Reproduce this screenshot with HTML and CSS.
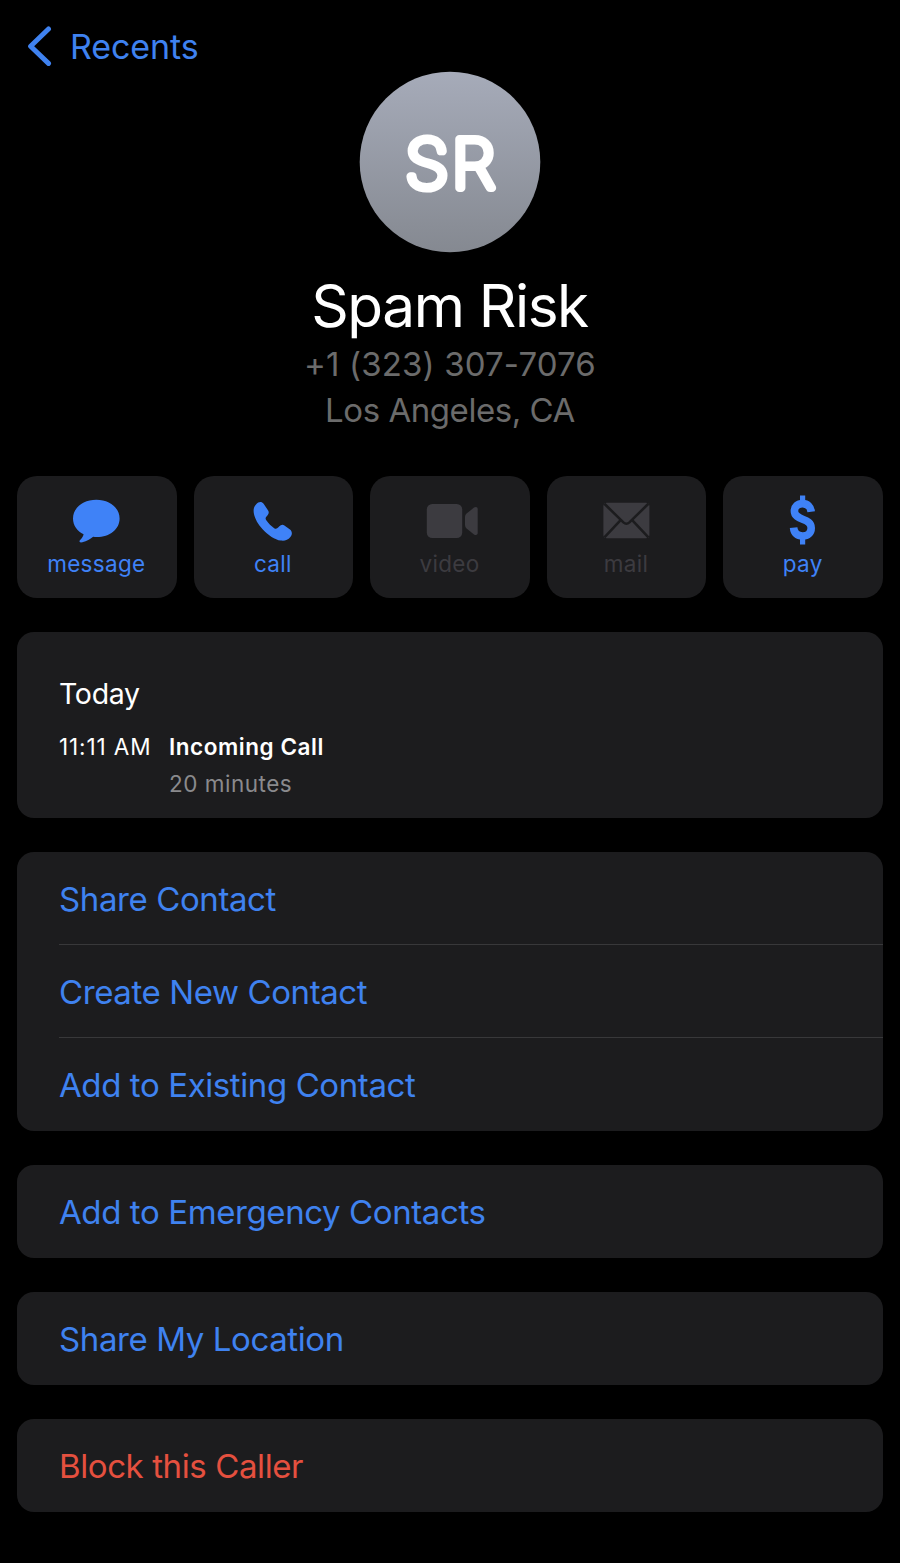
FILE: index.html
```html
<!DOCTYPE html>
<html lang="en">
<head>
  <meta charset="utf-8">
  <title>Spam Risk</title>
  <link rel="stylesheet" href="styles.css">
</head>
<body>
  <nav class="nav">
    <a class="back">
      <svg class="back-icon" width="26" height="42" viewBox="0 0 26 42">
        <path d="M22.5 4 L4.6 21.2 L22.5 38.4" fill="none" stroke="currentColor" stroke-width="5" stroke-linecap="round" stroke-linejoin="round"/>
      </svg>
      <span class="back-label">Recents</span>
    </a>
  </nav>

  <header class="profile">
    <svg class="avatar" width="182" height="182" viewBox="0 0 182 182">
      <defs>
        <linearGradient id="avatarFill" x1="0" y1="0" x2="0" y2="1">
          <stop offset="0" stop-color="#a6abb9"/>
          <stop offset="1" stop-color="#858991"/>
        </linearGradient>
      </defs>
      <circle cx="91" cy="91" r="90.3" fill="url(#avatarFill)"/>
      <text class="initials" transform="translate(92.5 117) scale(1.06 1)" text-anchor="middle">SR</text>
    </svg>
    <h1 class="name">Spam Risk</h1>
    <p class="phone">+1 (323) 307-7076</p>
    <p class="place">Los Angeles, CA</p>
  </header>

  <div class="actions">
    <button class="action">
      <svg class="action-icon" width="60" height="52" viewBox="0 0 60 52">
        <path d="M29.3 5.8 C42.3 5.8 52.6 13.8 52.6 24.4 C52.6 35 42.8 43 29.8 43 C28.5 43 27.3 42.9 26.1 42.8 C22.8 45.6 17.8 48.4 13.9 48.4 C12.5 48.4 12.1 47.2 12.9 46.3 C14.6 44.4 16.1 42.5 16.6 40.2 C10.1 37 6 31.2 6 24.4 C6 13.8 16.3 5.8 29.3 5.8 Z" fill="currentColor"/>
      </svg>
      <span class="action-label">message</span>
    </button>
    <button class="action">
      <svg class="action-icon" width="60" height="52" viewBox="0 0 60 52">
        <path d="M13.2 10.2 C15.6 7.6 18.6 7.3 20.6 9.8 L24.8 16 C26.2 18 26 19.6 24.6 21.2 C22.6 23.5 22 24.3 23.3 26.2 C25.4 29.2 28.4 32.2 31.2 34.2 C32.8 35.2 34 34.9 35.4 33.3 C37.2 31.1 39.4 30.2 41.4 31.4 L47 35.4 C49.4 37.4 49.4 40.6 47.4 43 C44.8 46.2 41.6 47.2 37.8 46.6 C31.8 45.6 25.4 41.4 19.6 35.2 C13.8 29 10.6 22 10.6 16.8 C10.6 14.2 11.4 12 13.2 10.2 Z" fill="currentColor"/>
      </svg>
      <span class="action-label">call</span>
    </button>
    <button class="action disabled" disabled>
      <svg class="action-icon" width="60" height="52" viewBox="0 0 60 52">
        <rect x="6.8" y="10" width="35.4" height="34" rx="5.5" fill="currentColor"/>
        <path d="M45 23.2 C45 21.6 45.5 20.6 46.6 19.5 L54 13.6 C56 12.2 57.7 13.2 57.7 15.2 V38.8 C57.7 40.8 56 41.8 54 40.4 L46.6 34.5 C45.5 33.4 45 32.4 45 30.8 Z" fill="currentColor"/>
      </svg>
      <span class="action-label">video</span>
    </button>
    <button class="action disabled" disabled>
      <svg class="action-icon" width="60" height="52" viewBox="0 0 60 52">
        <rect x="6.4" y="8.8" width="46" height="35.4" rx="3.5" fill="currentColor"/>
        <path d="M7.4 9.8 L26.4 28.4 C28.4 30.2 30.4 30.2 32.4 28.4 L51.4 9.8 M7.4 43.4 L23.4 26.4 M51.4 43.4 L35.4 26.4" class="envelope-lines"/>
      </svg>
      <span class="action-label">mail</span>
    </button>
    <button class="action">
      <svg class="action-icon" width="60" height="52" viewBox="0 0 60 52">
        <path d="M29.6 1.4 V9 M29.6 42 V50.6" fill="none" stroke="currentColor" stroke-width="5.2"/>
        <path d="M38.2 17.8 C37.6 12.6 34.4 9.6 29.7 9.6 C24.6 9.6 21.4 12.6 21.4 17 C21.4 27 38.2 23.4 38.2 34 C38.2 38.8 35 42 29.6 42 C24 42 21 38.8 20.6 33.6" fill="none" stroke="currentColor" stroke-width="7.6"/>
      </svg>
      <span class="action-label">pay</span>
    </button>
  </div>

  <section class="card history">
    <h2 class="day">Today</h2>
    <div class="call">
      <span class="call-time">11:11 AM</span>
      <div class="call-info">
        <div class="call-type">Incoming Call</div>
        <div class="call-length">20 minutes</div>
      </div>
    </div>
  </section>

  <section class="card">
    <a class="row">Share Contact</a>
    <a class="row">Create New Contact</a>
    <a class="row">Add to Existing Contact</a>
  </section>

  <section class="card">
    <a class="row">Add to Emergency Contacts</a>
  </section>

  <section class="card">
    <a class="row">Share My Location</a>
  </section>

  <section class="card">
    <a class="row danger">Block this Caller</a>
  </section>
</body>
</html>
```

FILE: styles.css
```css
* {
  box-sizing: border-box;
}

body {
  margin: 0;
  padding: 0 17px;
  background-color: #000;
  color: #fff;
  font-family: Inter, "Liberation Sans", sans-serif;
}

h1, h2, p {
  margin: 0;
  font-weight: 400;
}

.nav {
  height: 71px;
  padding: 25px 0 0 9px;
}

.back {
  display: flex;
  align-items: center;
  height: 42px;
  color: #3f82f0;
}

.back-label {
  margin-left: 18px;
  padding-top: 2px;
  font-size: 34px;
  line-height: 42px;
  letter-spacing: -0.1px;
}

.profile {
  display: flex;
  flex-direction: column;
  align-items: center;
  height: 405px;
}

.avatar {
  display: block;
}

.initials {
  font-size: 67px;
  font-weight: 100;
  fill: #fff;
  stroke: #fff;
  stroke-width: 8px;
  stroke-linejoin: round;
  letter-spacing: 2.5px;
}

.name {
  margin-top: 18px;
  padding-right: 1px;
  font-size: 58.5px;
  line-height: 70px;
  letter-spacing: -1.4px;
}

.phone,
.place {
  color: #6b6b6b;
  font-size: 33px;
  line-height: 46px;
}

.phone {
  letter-spacing: 0.15px;
}

.place {
  letter-spacing: -0.45px;
}

.actions {
  display: flex;
  gap: 17px;
}

.action {
  display: flex;
  flex: 1;
  flex-direction: column;
  align-items: center;
  height: 122px;
  padding: 18px 0 0;
  border: none;
  border-radius: 20px;
  background-color: #1c1c1e;
  color: #3f82f7;
  font-family: inherit;
}

.action-label {
  margin-top: 4px;
  padding-right: 1px;
  font-size: 22.5px;
  line-height: 28px;
  letter-spacing: 0.3px;
}

.action.disabled {
  color: #3c3b40;
}

.envelope-lines {
  fill: none;
  stroke: #1c1c1e;
  stroke-width: 2.6;
}

.card {
  margin-top: 34px;
  border-radius: 17px;
  background-color: #1c1c1e;
  overflow: hidden;
}

.history {
  height: 186px;
  padding: 44px 42px 0;
}

.day {
  font-size: 28.5px;
  line-height: 36px;
  letter-spacing: -0.3px;
}

.call {
  display: flex;
  margin-top: 17px;
  font-size: 22.5px;
  line-height: 36.5px;
}

.call-time {
  width: 110px;
  letter-spacing: 0.9px;
}

.call-type {
  font-weight: 600;
  letter-spacing: 0.55px;
}

.call-length {
  color: #8a8a8d;
  letter-spacing: 0.5px;
}

.row {
  display: flex;
  align-items: center;
  height: 93px;
  margin-left: 42px;
  color: #3f82f0;
  font-size: 33px;
  letter-spacing: -0.4px;
}

.row:not(:last-child) {
  padding-top: 2px;
  border-bottom: 1px solid #38383a;
}

.row.danger {
  color: #e5503f;
}
```
